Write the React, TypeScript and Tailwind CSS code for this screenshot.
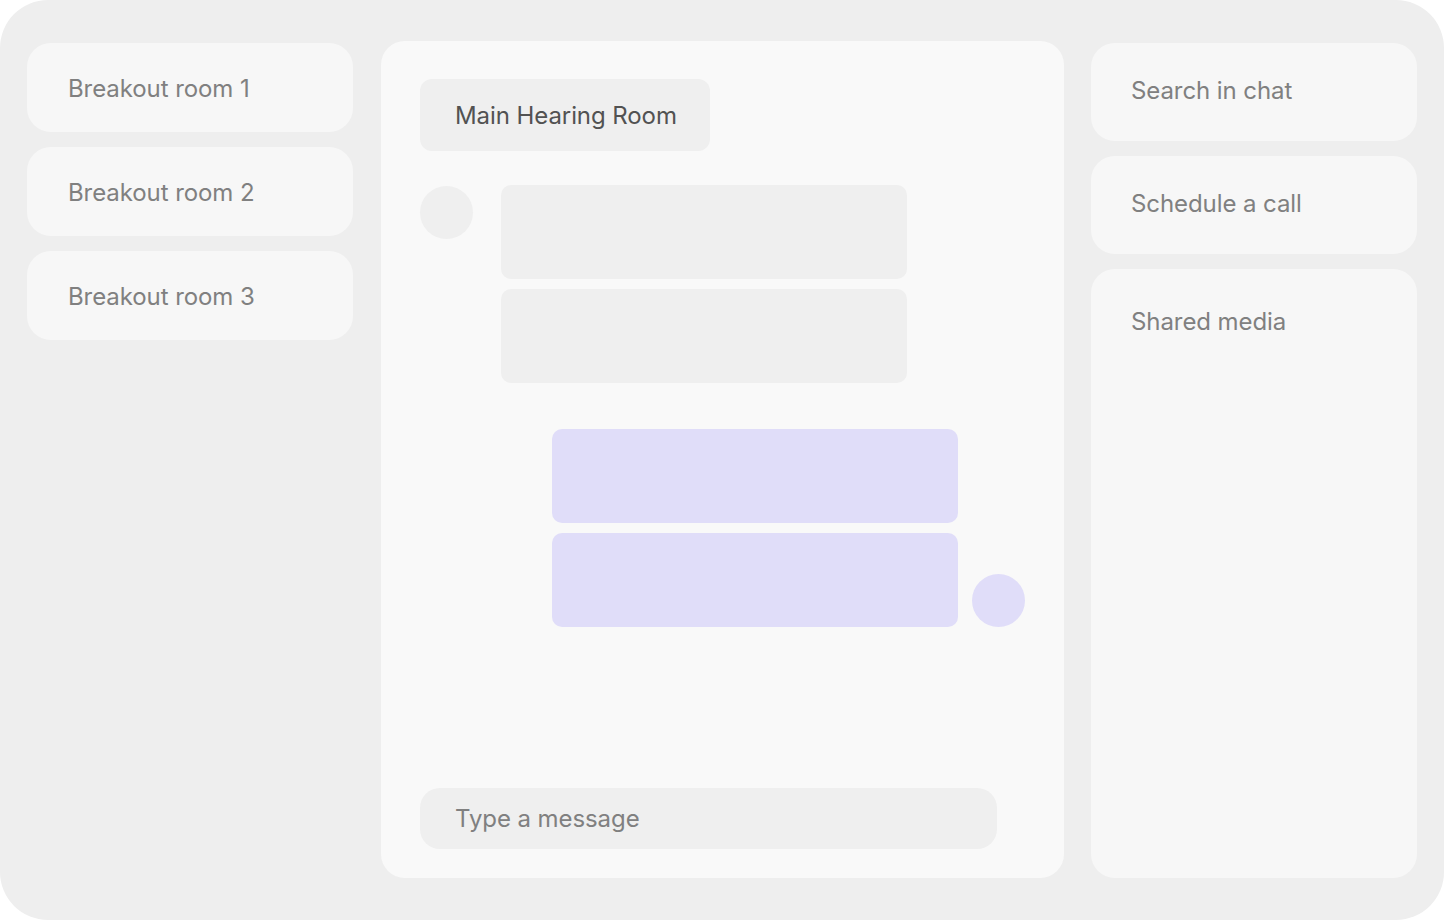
export default function App() {
  const font = { fontFamily: 'Inter, "Noto Sans", sans-serif' };
  return (
    <div className="w-[1444px] h-[920px] bg-white" style={font}>
      <div className="w-full h-full bg-[#eeeeee] rounded-[48px] flex px-[27px] pt-[41px] pb-[42px] tracking-[-0.08px]">
        {/* Left column */}
        <div className="w-[326px] shrink-0 flex flex-col gap-[15px] pt-[2px]">
          {["Breakout room 1", "Breakout room 2", "Breakout room 3"].map((t) => (
            <div
              key={t}
              className="h-[89px] rounded-[24px] bg-[#f7f7f7] flex items-center pl-[41px] pt-[2px] text-[24px] text-[#808080]"
            >
              {t}
            </div>
          ))}
        </div>

        {/* Center panel */}
        <div className="ml-[28px] w-[683px] shrink-0 rounded-[24px] bg-[#f9f9f9] flex flex-col pl-[39px] pr-[39px] pt-[38px] pb-[29px]">
          <div className="w-[290px] h-[72px] rounded-[12px] bg-[#efefef] flex items-center pl-[35px] pt-[1px] text-[24px] text-[#525252]">
            Main Hearing Room
          </div>

          <div className="flex mt-[34px]">
            <div className="w-[53px] h-[53px] shrink-0 rounded-full bg-[#efefef] mt-[1px]" />
            <div className="ml-[28px] flex flex-col gap-[10px]">
              <div className="w-[406px] h-[94px] rounded-[10px] bg-[#efefef]" />
              <div className="w-[406px] h-[94px] rounded-[10px] bg-[#efefef]" />
            </div>
          </div>

          <div className="flex items-end mt-[46px] pl-[132px]">
            <div className="flex flex-col gap-[10px] shrink-0">
              <div className="w-[406px] h-[94px] rounded-[10px] bg-[#e0ddf9]" />
              <div className="w-[406px] h-[94px] rounded-[10px] bg-[#e0ddf9]" />
            </div>
            <div className="ml-[14px] w-[53px] h-[53px] shrink-0 rounded-full bg-[#e0ddf9]" />
          </div>

          <div className="mt-auto w-[577px] h-[61px] rounded-[20px] bg-[#efefef] flex items-center pl-[35px] text-[24px] text-[#808080]">
            Type a message
          </div>
        </div>

        {/* Right column */}
        <div className="ml-[27px] w-[326px] shrink-0 flex flex-col gap-[15px] pt-[2px]">
          <div className="h-[98px] rounded-[24px] bg-[#f7f7f7] flex items-center pl-[40px] pb-[2px] text-[24px] text-[#808080]">
            Search in chat
          </div>
          <div className="h-[98px] rounded-[24px] bg-[#f7f7f7] flex items-center pl-[40px] pb-[2px] text-[24px] text-[#808080]">
            Schedule a call
          </div>
          <div className="flex-1 rounded-[24px] bg-[#f7f7f7] pl-[40px] pt-[38px] text-[24px] leading-[29px] text-[#808080]">
            Shared media
          </div>
        </div>
      </div>
    </div>
  );
}
